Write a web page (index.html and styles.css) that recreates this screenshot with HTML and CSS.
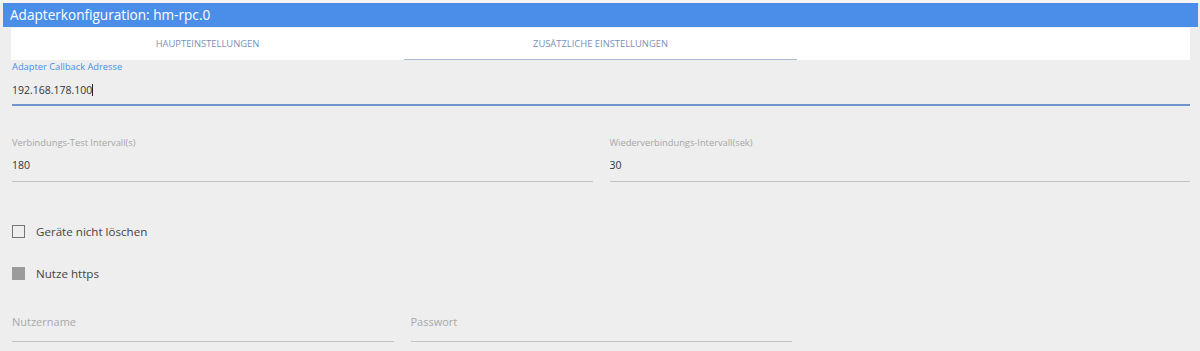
FILE: index.html
```html
<!DOCTYPE html>
<html lang="de">
<head>
    <meta charset="UTF-8">
    <title>Adapterkonfiguration: hm-rpc.0</title>
    <link rel="stylesheet" href="styles.css">
</head>
<body>
    <div class="title-bar">Adapterkonfiguration: hm-rpc.0</div>

    <div class="content">
        <div class="tabs">
            <div class="tab">HAUPTEINSTELLUNGEN</div>
            <div class="tab active">ZUSÄTZLICHE EINSTELLUNGEN</div>
        </div>

        <div class="field focused full">
            <label>Adapter Callback Adresse</label>
            <div class="value">192.168.178.100<span class="caret"></span></div>
        </div>

        <div class="row two">
            <div class="field">
                <label>Verbindungs-Test Intervall(s)</label>
                <div class="value">180</div>
            </div>
            <div class="field">
                <label>Wiederverbindungs-Intervall(sek)</label>
                <div class="value">30</div>
            </div>
        </div>

        <div class="check first">
            <span class="box"></span>
            <span>Geräte nicht löschen</span>
        </div>
        <div class="check">
            <span class="box disabled"></span>
            <span>Nutze https</span>
        </div>

        <div class="row three">
            <div class="field empty">
                <div class="placeholder">Nutzername</div>
            </div>
            <div class="field empty">
                <div class="placeholder">Passwort</div>
            </div>
        </div>
    </div>
</body>
</html>
```

FILE: styles.css
```css
body { margin: 0; background: #eeeeee; font-family: "Open Sans", "Liberation Sans", sans-serif; color: #333; height: 351px; overflow: hidden; border-top: 3px solid #f6f6f6; box-sizing: border-box; }
.title-bar { margin: 0 2px 0 3px; height: 24px; background: #4a8ee9; color: #fff; font-size: 13.6px; line-height: 24px; padding-left: 7px; }
.content { padding: 1px 10px 0 12px; }
.tabs { display: flex; background: #fff; height: 32px; margin-left: -1px; }
.tab { width: 393px; text-align: center; font-size: 9.4px; line-height: 32px; color: #7990b8; }
.tab.active { box-shadow: inset 0 -1px 0 #a9bad4; }
.field { border-bottom: 1px solid #c4c4c4; }
.field label { display: block; font-size: 9.3px; color: #a6a6a6; line-height: 10px; }
.field .value { font-size: 10.5px; color: #333; line-height: 14px; }
.field.focused { border-bottom: 2px solid #6f95cf; margin-top: 2px; padding-bottom: 7px; }
.field.focused label { color: #4a8ee9; }
.field.focused .value { margin-top: 11px; }
.caret { display: inline-block; width: 1px; height: 12px; background: #222; vertical-align: -2px; }
.row { display: flex; gap: 17px; }
.row.two { margin-top: 32px; }
.row.two .field { flex: 1; padding-bottom: 9px; }
.row.two .field .value { margin-top: 10px; }
.row.three { margin-top: 35px; width: 780px; }
.row.three .field { flex: 1; padding-bottom: 12px; }
.placeholder { font-size: 11px; color: #a8a8a8; line-height: 14px; }
.check { display: flex; align-items: center; gap: 11px; font-size: 11.6px; color: #444; height: 14px; }
.check.first { margin-top: 42px; }
.check + .check { margin-top: 28px; }
.box { width: 11px; height: 11px; border: 1px solid #757575; display: inline-block; }
.box.disabled { background: #9b9b9b; border-color: #9b9b9b; }
```
